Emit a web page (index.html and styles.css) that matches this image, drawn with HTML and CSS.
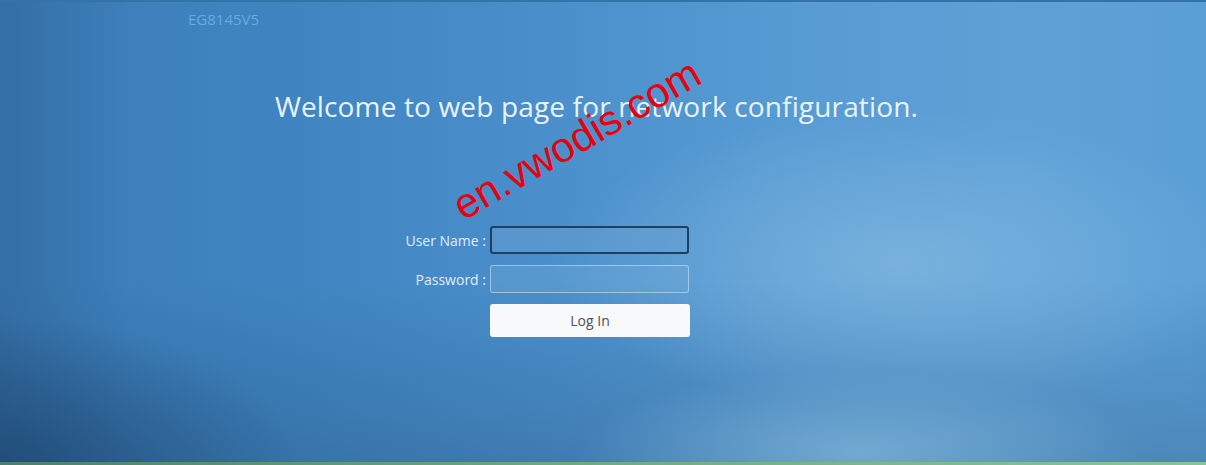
FILE: index.html
```html
<!DOCTYPE html>
<html lang="en">
<head>
<meta charset="utf-8">
<title>EG8145V5</title>
<link rel="stylesheet" href="styles.css">
</head>
<body>
<div class="page">
  <div class="model">EG8145V5</div>
  <h1 class="welcome">Welcome to web page for network configuration.</h1>
  <form class="login">
    <div class="row">
      <label class="label" for="user">User Name :</label>
      <input class="field field-active" id="user" type="text">
    </div>
    <div class="row">
      <label class="label" for="pass">Password :</label>
      <input class="field" id="pass" type="password">
    </div>
    <div class="row">
      <span class="label"></span>
      <button class="btn" type="button">Log In</button>
    </div>
  </form>
  <div class="watermark">en.vwodis.com</div>
  <div class="footer-strip"></div>
</div>
</body>
</html>
```

FILE: styles.css
```css
html, body {
  margin: 0;
  padding: 0;
  width: 1206px;
  height: 465px;
  overflow: hidden;
}

.page {
  position: relative;
  width: 1206px;
  height: 465px;
  box-sizing: border-box;
  border-top: 2px solid #3572a8;
  font-family: "Open Sans", "Noto Sans", sans-serif;
  background:
    radial-gradient(ellipse 400px 200px at 0px 465px, rgba(25, 62, 100, 0.6), rgba(25, 62, 100, 0) 75%),
    linear-gradient(90deg, rgba(35, 80, 125, 0.3) 0px, rgba(35, 80, 125, 0) 130px),
    radial-gradient(ellipse 380px 110px at 860px 450px, rgba(140, 192, 226, 0.6), rgba(140, 192, 226, 0) 75%),
    radial-gradient(ellipse 480px 210px at 900px 260px, rgba(140, 190, 226, 0.6), rgba(140, 190, 226, 0) 72%),
    linear-gradient(180deg, rgba(20, 50, 85, 0) 0%, rgba(20, 50, 85, 0) 60%, rgba(20, 50, 85, 0.22) 100%),
    linear-gradient(90deg, #3b7cb7 0%, #3f84c0 22%, #4a8fcb 45%, #579bd3 65%, #5ea1d7 85%, #5a9fd6 100%);
  display: flex;
  flex-direction: column;
  align-items: center;
}

.model {
  align-self: flex-start;
  margin: 7px 0 0 188px;
  font-size: 15px;
  line-height: 20px;
  color: #68a9e0;
}

.welcome {
  margin: 58px 13px 0 0;
  font-weight: 400;
  font-size: 28px;
  line-height: 38px;
  letter-spacing: 0.15px;
  color: #eaf2fa;
}

.login {
  align-self: flex-start;
  margin: 101px 0 0 396px;
  display: flex;
  flex-direction: column;
  gap: 11px;
}

.row {
  display: flex;
  align-items: center;
}

.label {
  width: 94px;
  box-sizing: border-box;
  text-align: right;
  padding-right: 4px;
  font-size: 14px;
  color: #e2ecf6;
}

.field {
  width: 199px;
  height: 28px;
  box-sizing: border-box;
  border: 1px solid rgba(200, 225, 245, 0.6);
  border-radius: 3px;
  background: rgba(120, 175, 220, 0.3);
  outline: none;
  margin: 0;
}

.field-active {
  border: 2px solid #20405f;
  background: rgba(105, 160, 210, 0.45);
}

.btn {
  width: 200px;
  height: 33px;
  box-sizing: border-box;
  border: none;
  border-radius: 3px;
  background: #f7f9fb;
  color: #505050;
  font-family: "Open Sans", "Noto Sans", sans-serif;
  font-size: 14px;
  margin: 0;
}

.watermark {
  position: absolute;
  left: 467px;
  top: 183px;
  height: 42px;
  font-family: "Liberation Sans", Arial, sans-serif;
  font-size: 42px;
  line-height: 42px;
  color: #e8000c;
  transform-origin: 0 100%;
  transform: rotate(-30deg);
  white-space: nowrap;
}

.footer-strip {
  position: absolute;
  left: 0;
  right: 0;
  bottom: 0;
  height: 3px;
  background: linear-gradient(90deg, #4f7f6c, #74a884 50%, #8cc29a);
}
```
